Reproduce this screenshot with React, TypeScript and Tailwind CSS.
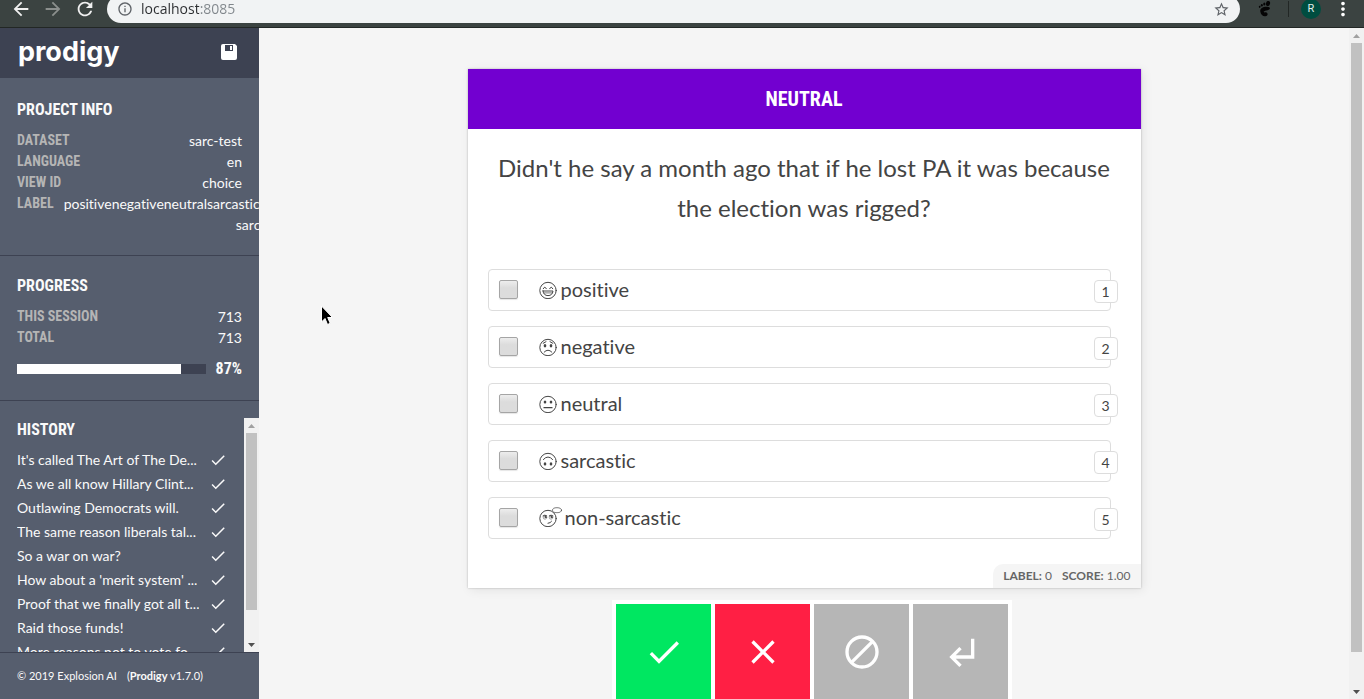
import type { ReactNode } from 'react';
import {
  MdArrowBack,
  MdArrowForward,
  MdCheck,
  MdClose,
  MdInfoOutline,
  MdMoreVert,
  MdRefresh,
  MdStarBorder,
  MdSubdirectoryArrowLeft,
} from 'react-icons/md';

const history = [
  "It's called The Art of The De...",
  'As we all know Hillary Clint...',
  'Outlawing Democrats will.',
  'The same reason liberals tal...',
  'So a war on war?',
  "How about a 'merit system' ...",
  'Proof that we finally got all t...',
  'Raid those funds!',
  'More reasons not to vote fo...',
];

const progress = 87;

function Face({ wide = false, children }: { wide?: boolean; children: ReactNode }) {
  return (
    <svg
      viewBox={wide ? '0 0 23 20' : '0 0 18 20'}
      className={wide ? 'mr-[3px] h-5 w-[23px]' : 'mr-1 h-5 w-[18px]'}
      fill="none"
      stroke="#444"
      strokeWidth="1"
      strokeLinecap="round"
      aria-hidden="true"
    >
      <circle cx="9" cy="11.5" r="8.2" />
      {children}
    </svg>
  );
}

const faces = {
  positive: (
    <Face>
      <path d="M4.300 9.700Q5.800 6.500 7.300 9.700M10.700 9.700Q12.200 6.500 13.700 9.700M4 12H14Q13.400 16.600 9 16.600Q4.600 16.600 4 12Z" />
      <path d="M5 13.900H13" strokeWidth="0.700" />
    </Face>
  ),
  negative: (
    <Face>
      <path d="M4.200 7.300L7 5.700M13.800 7.300L11 5.700M5.200 16.100Q9 12.100 12.800 16.100" />
      <g fill="#444" stroke="none">
        <ellipse cx="6" cy="9.800" rx="1.300" ry="1.700" />
        <ellipse cx="12" cy="9.800" rx="1.300" ry="1.700" />
      </g>
    </Face>
  ),
  neutral: (
    <Face>
      <path d="M5 14.700H13" strokeWidth="1.300" />
      <g fill="#444" stroke="none">
        <ellipse cx="6" cy="9" rx="1.300" ry="1.600" />
        <ellipse cx="12" cy="9" rx="1.300" ry="1.600" />
      </g>
    </Face>
  ),
  sarcastic: (
    <Face>
      <path d="M4.400 9.500Q9 4.300 13.600 9.500" />
      <g fill="#444" stroke="none">
        <ellipse cx="6" cy="13.900" rx="1.300" ry="1.600" />
        <ellipse cx="12" cy="13.900" rx="1.300" ry="1.600" />
      </g>
    </Face>
  ),
  'non-sarcastic': (
    <Face wide>
      <ellipse cx="18" cy="3.200" rx="4.500" ry="2.500" fill="#fff" strokeWidth="0.700" />
      <path d="M4 8.800Q5.800 7.300 7.800 8.800M10.200 8.800Q12 7.300 14 8.800M9 16.300Q11.500 16.100 12.600 14.300" />
      <g strokeWidth="0.500">
        <circle cx="6" cy="10.500" r="1.700" />
        <circle cx="12" cy="10.500" r="1.700" />
      </g>
      <g fill="#444" stroke="none">
        <circle cx="6.500" cy="10.100" r="1" />
        <circle cx="12.500" cy="10.100" r="1" />
      </g>
    </Face>
  ),
};

const options = ['positive', 'negative', 'neutral', 'sarcastic', 'non-sarcastic'] as const;

function Scrollbar({ thumb }: { thumb: string }) {
  return (
    <div className="flex w-[15px] shrink-0 flex-col items-center bg-[#f1f1f1]" aria-hidden="true">
      <svg viewBox="0 0 15 15" className="size-[15px] shrink-0">
        <path d="M4 10L7.500 6L11 10Z" fill="#a0a0a0" />
      </svg>
      <div className="flex w-full grow flex-col items-center">
        <div className={`w-[11px] bg-[#c1c1c1] ${thumb}`} />
      </div>
      <svg viewBox="0 0 15 15" className="size-[15px] shrink-0">
        <path d="M4 6L7.500 10L11 6Z" fill="#505050" />
      </svg>
    </div>
  );
}

function Heading({ children }: { children: ReactNode }) {
  return (
    <h2 className="font-['Roboto_Condensed',Roboto,sans-serif] text-base leading-6 font-bold uppercase">
      {children}
    </h2>
  );
}

function Info({ label, children }: { label: string; children: ReactNode }) {
  return (
    <div className="flex justify-between gap-2.5">
      <dt className="shrink-0 font-['Roboto_Condensed',Roboto,sans-serif] text-sm leading-[21px] font-bold text-[#b5b5b5] uppercase">
        {label}
      </dt>
      <dd className="shrink-0 text-right text-sm leading-[21px]">{children}</dd>
    </div>
  );
}

function BrowserBar() {
  return (
    <div className="flex h-7 shrink-0 items-end overflow-hidden border-b border-[#222725] bg-[#3b4341] px-2.5 pb-1">
      <div className="flex h-7 shrink-0 items-center gap-2.5 text-[22px] text-[#f0f0f0]">
        <button type="button" aria-label="Back"><MdArrowBack /></button>
        <button type="button" aria-label="Forward" className="text-[#8b8f8d]"><MdArrowForward /></button>
        <button type="button" aria-label="Reload"><MdRefresh /></button>
      </div>
      <div className="ml-[11px] flex h-7 grow items-center rounded-full bg-[#f1f3f4] px-2.5">
        <MdInfoOutline className="size-4 shrink-0 text-[#5f6368]" />
        <input
          aria-label="Address"
          defaultValue="localhost:8085"
          className="ml-2 h-5 min-w-0 grow bg-[linear-gradient(to_right,#2b2d30_58px,#80868b_58px)] bg-clip-text font-['Open_Sans',sans-serif] text-sm leading-5 text-transparent outline-none"
        />
        <button type="button" aria-label="Bookmark this page"><MdStarBorder className="size-[17px] text-[#5f6368]" /></button>
      </div>
      <div className="flex h-7 shrink-0 items-center pl-[17px]">
        <svg viewBox="0 0 16 16" className="size-4" fill="#050505" aria-hidden="true">
          <ellipse cx="11" cy="2.500" rx="2" ry="2.600" transform="rotate(20 11 2.500)" />
          <ellipse cx="7.300" cy="2.900" rx="1.100" ry="1.500" />
          <ellipse cx="4.800" cy="4.200" rx="1" ry="1.300" />
          <ellipse cx="2.700" cy="5.800" rx="0.900" ry="1.100" />
          <path d="M11.500 6C6.500 5.200 2.800 7.500 3.300 10.500C3.700 13.500 6 15.500 8.500 15.200C10.800 15 11.400 12.200 9.500 11.400C8.400 11 7.600 12 6.800 11C6 9.600 12.600 9.600 12.900 7.500C13 6.500 12.300 6.100 11.500 6Z" />
        </svg>
        <div className="mr-3 ml-[15px] h-4 w-px bg-[#222725]" />
        <button type="button" className="size-5 rounded-full bg-[#004d40] font-['Roboto',sans-serif] text-[11px] leading-5 text-[#e0eeea]">
          R
        </button>
        <button type="button" aria-label="Menu" className="ml-[11px]"><MdMoreVert className="size-[22px] text-white" /></button>
      </div>
    </div>
  );
}

function Sidebar() {
  return (
    <aside className="flex w-[259px] shrink-0 flex-col overflow-hidden bg-[#565e6e] text-[#fafafa]">
      <header className="flex h-[50px] shrink-0 items-center justify-between bg-[#3d4252] pr-[22px] pb-0.5 pl-[18px]">
        <h1 className="font-['Inter',sans-serif] text-[27px] leading-8 font-bold text-white">prodigy</h1>
        <button type="button" aria-label="Save">
          <svg viewBox="0 0 16 16" className="size-4" aria-hidden="true">
            <path fill="#fff" fillRule="evenodd" d="M2 0H14L16 2V14Q16 16 14 16H2Q0 16 0 14V2Q0 0 2 0ZM4 1V7H12V1ZM9 2H11V6H9Z" />
          </svg>
        </button>
      </header>

      <section className="shrink-0 border-b border-[#3d4252] px-[17px] py-5">
        <Heading>Project Info</Heading>
        <dl className="mt-2 [font-variant-ligatures:none]">
          <Info label="Dataset">sarc-test</Info>
          <Info label="Language">en</Info>
          <Info label="View ID">choice</Info>
          <Info label="Label">
            positivenegativeneutralsarcasticnon-
            <br />
            sarcastic
          </Info>
        </dl>
      </section>

      <section className="shrink-0 border-b border-[#3d4252] px-[17px] pt-[18px] pb-5">
        <Heading>Progress</Heading>
        <dl className="mt-2">
          <Info label="This session">713</Info>
          <Info label="Total">713</Info>
        </dl>
        <div className="mt-2.5 flex items-center gap-2.5">
          <div className="h-2.5 grow bg-[#3d4252]">
            <div className="h-full bg-white" style={{ width: `${progress}%` }} />
          </div>
          <span className="font-['Roboto_Condensed',Roboto,sans-serif] text-base leading-[22px] font-bold">{progress}%</span>
        </div>
      </section>

      <section className="flex min-h-0 grow pt-[17px]">
        <div className="min-w-0 grow overflow-hidden pr-[17px] pl-[17px]">
          <Heading>History</Heading>
          <ul className="mt-1.5">
            {history.map((text) => (
              <li key={text} className="flex h-6 items-center justify-between text-sm">
                <a href="#task" className="truncate">{text}</a>
                <MdCheck className="size-[18px] shrink-0" />
              </li>
            ))}
          </ul>
        </div>
        <Scrollbar thumb="h-[87%]" />
      </section>

      <footer className="flex h-[47px] shrink-0 items-center gap-2.5 border-t border-[#3d4252] px-[17px] text-[11px]">
        <span>© 2019 Explosion AI</span>
        <span>(<b>Prodigy</b> v1.7.0)</span>
      </footer>
    </aside>
  );
}

export default function App() {
  return (
    <div className="relative flex h-screen flex-col overflow-hidden bg-[#f5f5f5] font-['Lato',sans-serif] text-[#444]">
      <BrowserBar />
      <div className="flex min-h-0 grow">
        <Sidebar />
        <main className="flex min-w-0 grow flex-col items-center overflow-hidden pt-[41px] [font-variant-ligatures:none]">
          <article className="flex w-full max-w-[673px] shrink-0 flex-col bg-white shadow-[0_0_2px_rgba(0,0,0,0.25),2px_2px_10px_rgba(0,0,0,0.08)]">
            <h2 className="bg-[#7200d0] text-center font-['Roboto_Condensed',Roboto,sans-serif] text-xl leading-[60px] font-bold text-white uppercase">
              Neutral
            </h2>
            <p className="px-5 pt-[19px] pb-[21px] text-center text-2xl leading-10">
              Didn't he say a month ago that if he lost PA it was because the election was rigged?
            </p>
            <div className="flex flex-col gap-[15px] pt-5 pr-[30px] pl-5">
              {options.map((name, index) => (
                <label key={name} className="relative flex h-[42px] items-center rounded border border-[#ddd] pb-0.5 pl-2.5 text-xl">
                  <input
                    type="checkbox"
                    className="mr-[21px] size-[19px] appearance-none rounded-[2px] border border-[#a5a5a5] bg-linear-to-b from-[#ededed] to-[#dcdcdc] to-40% shadow-[0_1px_1px_rgba(0,0,0,0.1)]"
                  />
                  {faces[name]}
                  {name}
                  <kbd className="absolute top-2.5 -right-2 flex h-[23px] w-6 items-center justify-center rounded border border-[#ddd] bg-white font-['Lato',sans-serif] text-sm">
                    {index + 1}
                  </kbd>
                </label>
              ))}
            </div>
            <div className="mt-[25px] flex h-6 gap-2.5 self-end rounded-tl-[10px] bg-[#f5f5f5] px-2.5 text-xs leading-6 text-[#666]">
              <span><b>LABEL:</b> 0</span>
              <span><b>SCORE:</b> 1.00</span>
            </div>
          </article>

          <div className="mt-3 ml-4 grid w-full max-w-[400px] shrink-0 grid-cols-4 gap-1 bg-white p-1 text-[40px] text-white">
            <button type="button" aria-label="Accept" className="flex h-24 items-center justify-center bg-[#00e761]"><MdCheck /></button>
            <button type="button" aria-label="Reject" className="flex h-24 items-center justify-center bg-[#ff1f44]"><MdClose /></button>
            <button type="button" aria-label="Ignore" className="flex h-24 items-center justify-center bg-[#b6b6b6]">
              <svg viewBox="0 0 24 24" className="size-10" fill="none" stroke="currentColor" strokeWidth="2" aria-hidden="true">
                <circle cx="12" cy="12" r="9" />
                <path d="M5.600 18.400L18.400 5.600" />
              </svg>
            </button>
            <button type="button" aria-label="Undo" className="flex h-24 items-center justify-center bg-[#b6b6b6]"><MdSubdirectoryArrowLeft /></button>
          </div>
        </main>
        <Scrollbar thumb="h-[95%]" />
      </div>
      <svg viewBox="0 0 14 22" className="absolute top-[305px] left-[320px] h-[22px] w-3.5" aria-hidden="true">
        <path d="M1.500 1V17L5 13.500L7.500 19.500L10.200 18.300L7.700 12.500H12.500Z" fill="#000" stroke="#fff" strokeWidth="1" />
      </svg>
    </div>
  );
}
